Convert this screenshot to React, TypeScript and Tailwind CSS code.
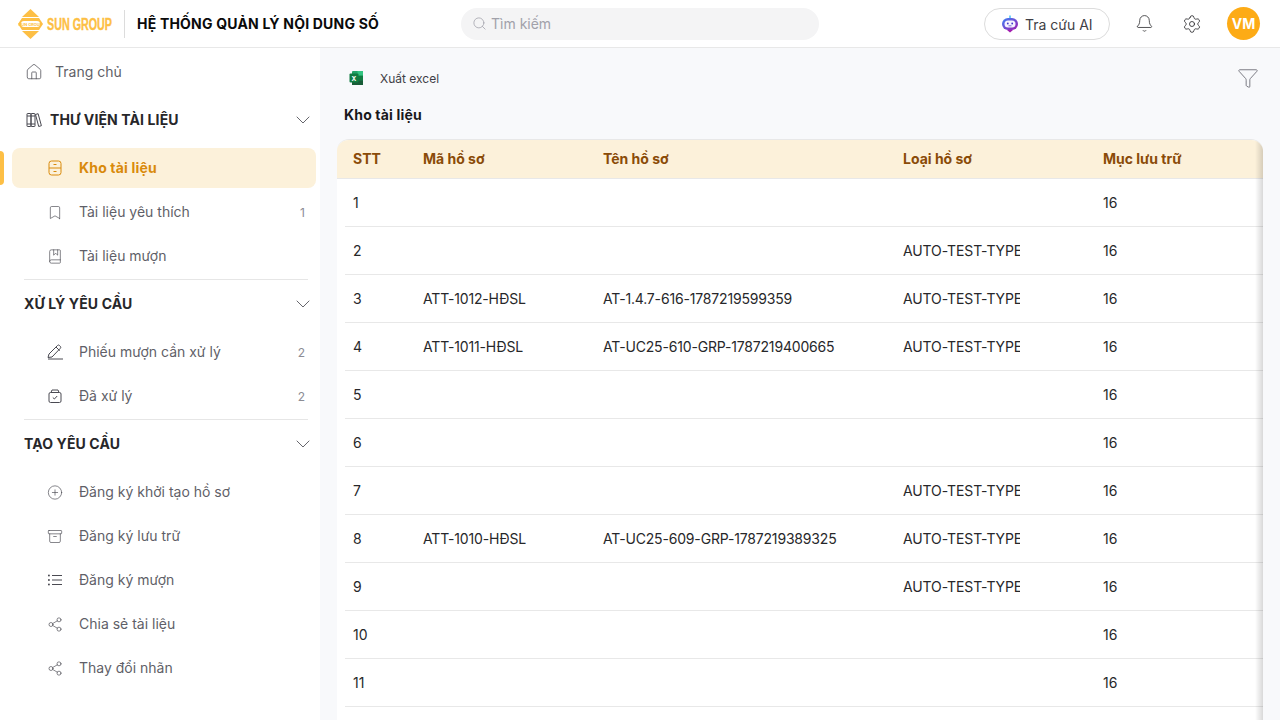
import React from "react";
import { House, Bookmark, BookMarked, CirclePlus, Archive, Share2, Funnel, ChevronDown, Bell, Settings, Search } from "lucide-react";

const Logo = () => (
  <svg width="104" height="32" viewBox="0 0 104 32" className="shrink-0">
    <polygon points="14.5,1 23,9 6,9" fill="#fdbf45" />
    <polygon points="6,23 23,23 14.5,31" fill="#fdbf45" />
    <polygon points="2,16 6,10 23,10 27,16 23,22 6,22" fill="#fdbf45" />
    <rect x="5" y="13" width="19" height="6" rx="3" fill="#ffffff" />
    <text x="14.5" y="17.5" fontSize="4" fontWeight="700" textAnchor="middle" fill="#fdbf45" fontFamily="Inter, sans-serif">SUN GROUP</text>
    <text x="31" y="22" fontSize="16" fontWeight="700" fill="#fdbf45" stroke="#fdbf45" strokeWidth="0.4" fontFamily="'Liberation Sans', sans-serif" textLength="65" lengthAdjust="spacingAndGlyphs">SUN GROUP</text>
  </svg>
);

const Bot = () => (
  <svg width="18" height="18" viewBox="0 0 18 18">
    <defs>
      <linearGradient id="botg" x1="0" y1="0" x2="1" y2="1">
        <stop offset="0" stopColor="#3b82f6" />
        <stop offset="1" stopColor="#a21caf" />
      </linearGradient>
    </defs>
    <rect x="8.3" y="0.5" width="1.4" height="3" fill="#38bdf8" />
    <rect x="1" y="3" width="16" height="12" rx="6" fill="url(#botg)" />
    <path d="M6 15h6l-3 2.5z" fill="#a21caf" />
    <rect x="3.5" y="5.5" width="11" height="7" rx="3.5" fill="#f5f3ff" />
    <circle cx="6.8" cy="8.5" r="0.9" fill="#4338ca" />
    <circle cx="11.2" cy="8.5" r="0.9" fill="#4338ca" />
    <path d="M7.5 10.8h3" stroke="#4338ca" strokeWidth="0.7" />
  </svg>
);

const Excel = () => (
  <svg width="15" height="16" viewBox="0 0 15 16">
    <rect x="3" y="1" width="11" height="14" rx="1" fill="#21a366" />
    <rect x="8.5" y="1" width="5.5" height="4.7" fill="#33c481" />
    <rect x="8.5" y="5.7" width="5.5" height="4.6" fill="#107c41" />
    <rect x="3" y="10.3" width="11" height="4.7" fill="#185c37" />
    <rect x="0.5" y="3.5" width="9" height="9" rx="1" fill="#107c41" />
    <text x="5" y="10.6" fontSize="6.5" fontWeight="700" textAnchor="middle" fill="#fff" fontFamily="Inter, sans-serif">X</text>
  </svg>
);

const Drawer = () => (
  <svg width="16" height="16" viewBox="0 0 16 16" fill="none" stroke="currentColor" strokeWidth="1">
    <rect x="2" y="1" width="12" height="14" rx="2.5" />
    <path d="M2 8h12M6.5 4.5h3M6.5 11.5h3" />
  </svg>
);

const BoxCheck = () => (
  <svg width="16" height="16" viewBox="0 0 16 16" fill="none" stroke="currentColor" strokeWidth="1">
    <path d="M4 4.5 5 2h6l1 2.5" />
    <rect x="2" y="4.5" width="12" height="10" rx="1.5" />
    <path d="M5.8 9.5 7.4 11l2.8-3" />
  </svg>
);

const ListIcon = () => (
  <svg width="16" height="16" viewBox="0 0 16 16" fill="none" stroke="currentColor" strokeWidth="1">
    <path d="M5 3.5h10M5 8h10M5 12.5h10" />
    <rect x="1" y="2.7" width="1.8" height="1.6" fill="currentColor" stroke="none" />
    <rect x="1" y="7.2" width="1.8" height="1.6" fill="currentColor" stroke="none" />
    <rect x="1" y="11.7" width="1.8" height="1.6" fill="currentColor" stroke="none" />
  </svg>
);

const Pen = () => (
  <svg width="18" height="18" viewBox="0 0 18 18" fill="none" stroke="currentColor" strokeWidth="1" className="shrink-0">
    <path d="M2 14.5 3 11 11.5 2.5a1.4 1.4 0 0 1 2 0l.8.8a1.4 1.4 0 0 1 0 2L6 14z" />
    <path d="M10 4l3.7 3.7M2 16h15" />
  </svg>
);

const Books = () => (
  <svg width="16" height="16" viewBox="0 0 16 16" fill="none" stroke="currentColor" strokeWidth="1">
    <rect x="1" y="1.5" width="4" height="13" rx="0.5" />
    <rect x="5" y="1.5" width="4" height="13" rx="0.5" />
    <path d="M1 4h8M1 12h8" />
    <path d="m9.5 2.5 2.6-.8 3.3 12-2.7.8z" />
  </svg>
);

const Item = ({ icon, label, count, active }: { icon: React.ReactNode; label: string; count?: number; active?: boolean }) => (
  <div className="relative">
    {active && <div className="absolute left-[-12px] top-[3px] h-[34px] w-1 rounded-r bg-[#fdbf45]" />}
    <div className={`flex h-10 items-center rounded-lg pl-[35px] pr-[11px] text-sm ${active ? "bg-[#fcf1da] font-bold tracking-[0.17px] text-[#d98a0b]" : "text-[#5f5f68]"}`}>
      <span className={`flex w-4 shrink-0 justify-center ${active ? "" : "text-[#4a4a52]"}`}>{icon}</span>
      <span className="ml-4 flex-1">{label}</span>
      {count !== undefined && <span className="mt-px text-xs text-[#8c8c94]">{count}</span>}
    </div>
  </div>
);

const Section = ({ label, icon }: { label: string; icon?: React.ReactNode }) => (
  <div className="flex h-10 items-center pl-3">
    {icon && <span className="ml-[2px] mr-2 flex w-4 text-[#4a4a52]">{icon}</span>}
    <span className="flex-1 text-sm font-bold tracking-[0.12px] text-[#27272a]">{label}</span>
    <ChevronDown size={24} strokeWidth={0.8} className="mr-px text-[#3f3f46]" />
  </div>
);

const Divider = () => <div className="mt-[3px] mb-1 ml-3 mr-2 h-px bg-[#e6e6e6]" />;

const rows = [
  ["1", "", "", "", "16"],
  ["2", "", "", "AUTO-TEST-TYPE", "16"],
  ["3", "ATT-1012-HĐSL", "AT-1.4.7-616-1787219599359", "AUTO-TEST-TYPE", "16"],
  ["4", "ATT-1011-HĐSL", "AT-UC25-610-GRP-1787219400665", "AUTO-TEST-TYPE", "16"],
  ["5", "", "", "", "16"],
  ["6", "", "", "", "16"],
  ["7", "", "", "AUTO-TEST-TYPE", "16"],
  ["8", "ATT-1010-HĐSL", "AT-UC25-609-GRP-1787219389325", "AUTO-TEST-TYPE", "16"],
  ["9", "", "", "AUTO-TEST-TYPE", "16"],
  ["10", "", "", "", "16"],
  ["11", "", "", "", "16"],
  ["12", "", "", "", "16"],
];

export default function App() {
  return (
    <div className="flex h-[720px] w-[1280px] flex-col overflow-hidden bg-white font-['Inter',sans-serif]">
      <header className="flex h-12 shrink-0 items-center border-b border-[#e8e8e8] bg-white">
        <div className="ml-4 flex w-[108px] items-center"><Logo /></div>
        <div className="h-7 w-px bg-[#dcdcdc]" />
        <div className="ml-3 w-[324px] text-sm font-bold tracking-[0.2px] whitespace-nowrap text-[#0a0a0a]">HỆ THỐNG QUẢN LÝ NỘI DUNG SỐ</div>
        <div className="flex h-8 w-[358px] items-center rounded-full bg-[#f4f4f5] pl-[11px] text-sm text-[#a1a1aa]">
          <Search size={15} strokeWidth={1.25} />
          <span className="ml-[4px]">Tìm kiếm</span>
        </div>
        <div className="ml-[165px] flex h-8 w-[126px] items-center rounded-full border border-[#dcdcdc] bg-white pl-4 text-sm text-[#3f3f46]">
          <Bot />
          <span className="ml-[6px] mt-[2px]">Tra cứu AI</span>
        </div>
        <Bell size={19} strokeWidth={1} className="ml-[25px] text-[#27272a]" />
        <Settings size={20} strokeWidth={1} className="ml-[28px] text-[#27272a]" />
        <div className="ml-[25px] flex h-[33px] w-[33px] items-center justify-center rounded-full bg-[#fdab16] text-sm font-bold text-white">VM</div>
      </header>

      <div className="flex min-h-0 flex-1">
        <aside className="w-80 shrink-0 bg-white pl-3 pr-1 pt-1">
          <div className="flex h-10 items-center pl-[13px] text-sm text-[#5f5f68]">
            <House size={18} strokeWidth={1} className="text-[#4a4a52]" />
            <span className="ml-3">Trang chủ</span>
          </div>
          <div className="mt-2"><Section label="THƯ VIỆN TÀI LIỆU" icon={<Books />} /></div>
          <div className="mt-2 flex flex-col gap-1">
            <Item active icon={<Drawer />} label="Kho tài liệu" />
            <Item icon={<Bookmark size={17} strokeWidth={1} />} label="Tài liệu yêu thích" count={1} />
            <Item icon={<BookMarked size={17} strokeWidth={1} />} label="Tài liệu mượn" />
          </div>
          <Divider />
          <Section label="XỬ LÝ YÊU CẦU" />
          <div className="mt-2 flex flex-col gap-1">
            <Item icon={<Pen />} label="Phiếu mượn cần xử lý" count={2} />
            <Item icon={<BoxCheck />} label="Đã xử lý" count={2} />
          </div>
          <Divider />
          <Section label="TẠO YÊU CẦU" />
          <div className="mt-2 flex flex-col gap-1">
            <Item icon={<CirclePlus size={17} strokeWidth={1} />} label="Đăng ký khởi tạo hồ sơ" />
            <Item icon={<Archive size={17} strokeWidth={1} />} label="Đăng ký lưu trữ" />
            <Item icon={<ListIcon />} label="Đăng ký mượn" />
            <Item icon={<Share2 size={17} strokeWidth={1} />} label="Chia sẻ tài liệu" />
            <Item icon={<Share2 size={17} strokeWidth={1} />} label="Thay đổi nhãn" />
          </div>
        </aside>

        <main className="min-w-0 flex-1 bg-[#f8f9fb] pl-[17px] pr-[17px]">
          <div className="flex h-[46px] items-center pt-[14px] pl-[12px]">
            <Excel />
            <span className="ml-[16px] mt-[2px] flex-1 text-xs text-[#3f3f46]">Xuất excel</span>
            <Funnel size={22} strokeWidth={1} className="mr-1 text-[#71717a]" />
          </div>
          <div className="mt-[11px] pl-[7px] text-sm font-bold tracking-[0.17px] text-[#18181b]">Kho tài liệu</div>
          <div className="relative mt-[14px] w-[926px] overflow-hidden rounded-t-xl border-t border-[#e8e8e8] bg-white">
            <div className="flex h-[39px] items-center border-b border-[#e8e8e8] bg-[#fcf1da] pl-2 text-sm font-bold text-[#8a4b08]">
              <div className="w-[70px] pl-2">STT</div>
              <div className="w-[180px] pl-2">Mã hồ sơ</div>
              <div className="w-[300px] pl-2">Tên hồ sơ</div>
              <div className="w-[200px] pl-2">Loại hồ sơ</div>
              <div className="pl-2">Mục lưu trữ</div>
            </div>
            {rows.map((r) => (
              <div key={r[0]} className="ml-2 flex h-12 items-center border-b border-[#e8e8e8] text-sm text-[#27272a]">
                <div className="w-[70px] pl-2">{r[0]}</div>
                <div className="w-[180px] pl-2 tracking-[-0.17px]">{r[1]}</div>
                <div className="w-[300px] pl-2 tracking-[-0.17px]">{r[2]}</div>
                <div className="w-[200px] pl-2"><div className="w-[117px] overflow-hidden whitespace-nowrap tracking-[-0.1px]">{r[3]}</div></div>
                <div className="pl-2">{r[4]}</div>
              </div>
            ))}
            <div className="absolute top-0 right-0 bottom-0 w-2 bg-gradient-to-r from-transparent to-black/15" />
          </div>
        </main>
      </div>
    </div>
  );
}
